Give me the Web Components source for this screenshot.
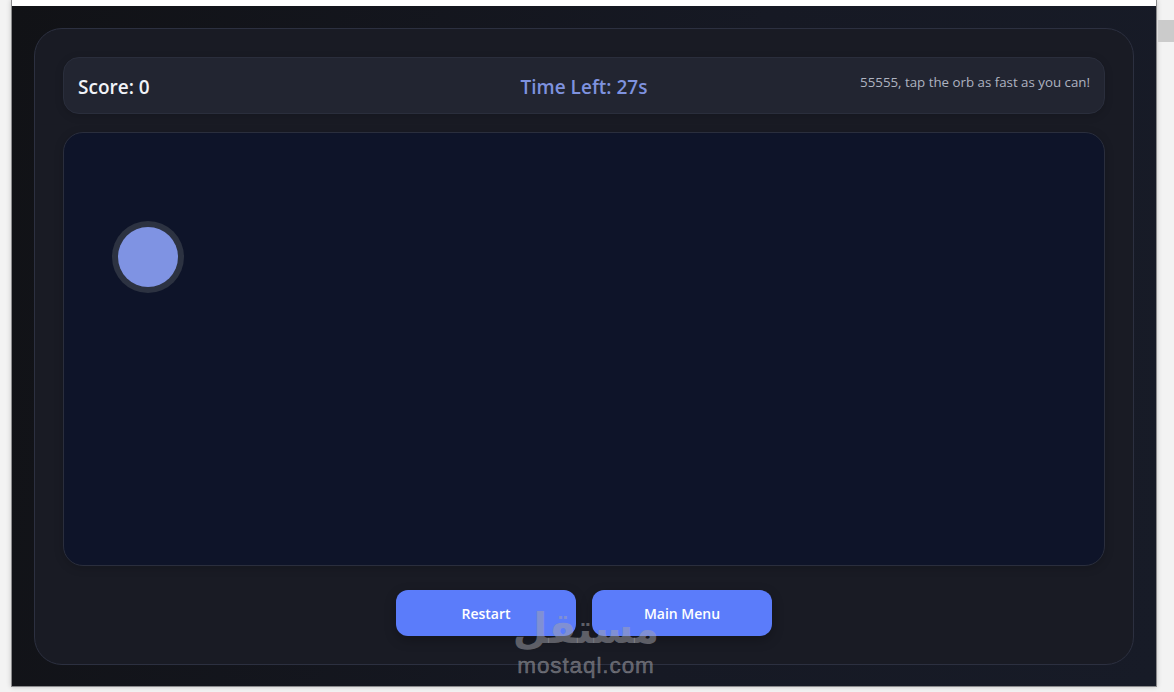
<!doctype html>
<html><head><meta charset="utf-8"><style>
html,body{margin:0;height:692px;overflow:hidden;background:#f3f3f3;font-family:"Open Sans","Noto Sans",sans-serif}
</style></head><body>
<game-desktop>
  <game-panel>
    <game-header score="Score: 0" time="Time Left: 27s" hint="55555, tap the orb as fast as you can!"></game-header>
    <game-field></game-field>
    <game-actions>
      <game-button>Restart</game-button>
      <game-button>Main Menu</game-button>
    </game-actions>
  </game-panel>
</game-desktop>
<script>
function def(name,html,init){customElements.define(name,class extends HTMLElement{constructor(){super();this.attachShadow({mode:'open'}).innerHTML=html;}connectedCallback(){init&&init(this)}})}
def('game-desktop',`<style>
:host{display:flex;width:1174px;height:692px;position:relative;box-sizing:border-box;padding-left:11px}
.win{width:1146px;height:687px;box-sizing:border-box;border-left:1px solid #8a8a8c;border-right:1px solid #8a8a8c;border-bottom:1px solid #8a8a8c;display:flex;flex-direction:column;box-shadow:0 0 5px rgba(0,0,0,.2)}
.top{height:6px;background:#fff;flex:none}
.body{flex:1;min-height:0;box-sizing:border-box;padding:22px 22px 21px 22px;background:linear-gradient(100deg,#111216,#161924 60%,#171b27)}
.rail{flex:1;padding-top:20px}.thumb{height:22px;background:#cbcbcb;margin-left:1px}
.mark{position:absolute;left:496px;top:604px;width:180px;text-align:center;color:rgba(165,165,172,.5);pointer-events:none}
.ar{font:700 40px/48px "DejaVu Sans",sans-serif;height:48px;transform:scaleY(1.05)}
.la{font:400 22.5px/24px "Liberation Sans",sans-serif;letter-spacing:.9px;margin-top:2px;-webkit-text-stroke:.5px rgba(165,165,172,.5)}
</style><div class="win"><div class="top"></div><div class="body"><slot></slot></div></div>
<div class="rail"><div class="thumb"></div></div>
<div class="mark"><div class="ar" lang="ar" dir="rtl">مستقل</div><div class="la">mostaql.com</div></div>`);
def('game-panel',`<style>
:host{display:flex;flex-direction:column;height:100%;box-sizing:border-box;padding:28px 28px 0;background:#191b24;border:1px solid #2c3040;border-radius:28px}
</style><slot></slot>`);
def('game-header',`<style>
:host{flex:none;display:grid;grid-template-columns:1fr auto 1fr;align-items:center;height:57px;box-sizing:border-box;padding:0 14px;background:#222531;border:1px solid #2a2e3c;border-radius:16px;box-shadow:0 2px 8px rgba(0,0,0,.15)}
.s{font-size:19px;font-weight:600;color:#f1f3f8;margin-top:3px}
.t{font-size:19px;font-weight:600;color:#7e92df;margin-top:3px}
.h{font-size:13.3px;color:#aeb3c0;text-align:right;margin-top:-7px}
</style><span class="s"></span><span class="t"></span><span class="h"></span>`,el=>{
 const r=el.shadowRoot;r.querySelector('.s').textContent=el.getAttribute('score');r.querySelector('.t').textContent=el.getAttribute('time');r.querySelector('.h').textContent=el.getAttribute('hint');});
def('game-field',`<style>
:host{flex:none;display:block;position:relative;height:434px;margin-top:18px;box-sizing:border-box;background:#0e1429;border:1px solid #2a2e3d;border-radius:20px;box-shadow:0 2px 10px rgba(0,0,0,.18)}
.orb{position:absolute;left:54px;top:94px;width:60px;height:60px;border-radius:50%;background:#7f93e3;box-shadow:0 0 0 6px #2c3241}
</style><div class="orb"></div>`);
def('game-actions',`<style>
:host{flex:none;display:flex;justify-content:center;gap:16px;margin-top:24px}
</style><slot></slot>`);
def('game-button',`<style>
:host{display:flex;align-items:center;justify-content:center;width:180px;height:46px;background:#5b7cfa;color:#fff;font-size:14px;font-weight:600;border-radius:12px;box-shadow:0 4px 12px rgba(0,0,0,.25)}
</style><slot></slot>`);
</script></body></html>
